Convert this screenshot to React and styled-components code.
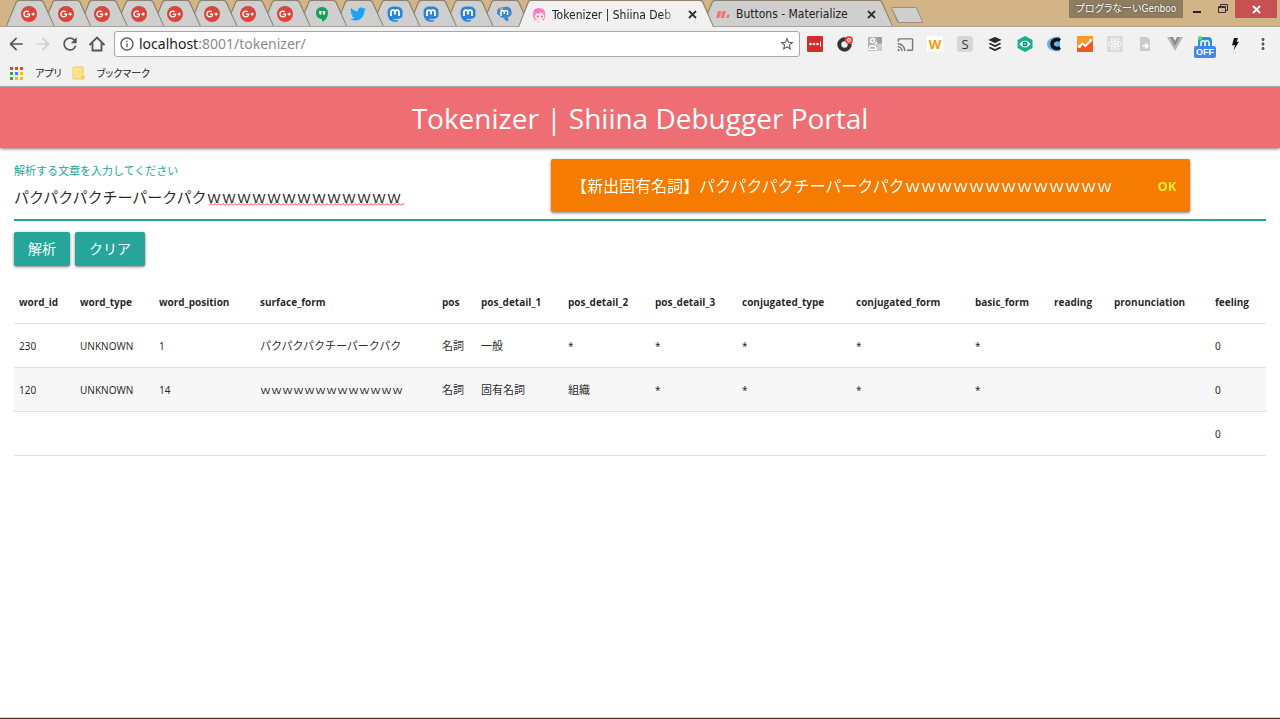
import React, { useState } from 'react';
import styled, { createGlobalStyle, css } from 'styled-components';
import { FaGooglePlusG, FaTwitter, FaBuffer, FaReact } from 'react-icons/fa';
import {
  MdArrowBack,
  MdArrowForward,
  MdRefresh,
  MdInfoOutline,
  MdStarBorder,
  MdCast,
  MdMoreVert,
} from 'react-icons/md';

const UI_FONT = "'DejaVu Sans Condensed', 'Noto Sans CJK JP', sans-serif";
const PAGE_FONT = "'Noto Sans', 'Noto Sans CJK JP', sans-serif";

const GlobalStyle = createGlobalStyle`
  * {
    box-sizing: border-box;
  }

  body {
    margin: 0;
    background: white;
    color: rgba(0, 0, 0, 0.87);
    font-family: ${PAGE_FONT};
  }

  button,
  input {
    margin: 0;
    padding: 0;
    border: 0;
    background: none;
    color: inherit;
    font: inherit;
  }

  svg {
    display: block;
    flex: none;
  }
`;

const Window = styled.div`
  display: flex;
  flex-direction: column;
  min-height: 100vh;
`;

/* ---------- tab strip ---------- */

const TabStrip = styled.div`
  display: flex;
  height: 27px;
  padding-left: 6px;
  background: #d2b487;
  border-bottom: 1px solid #a9a39a;
  font-family: ${UI_FONT};
`;

const PinnedTabs = styled.div`
  display: grid;
  grid-template-columns: repeat(14, 1fr);
  flex: 0 0 512px;
`;

const Tab = styled.div`
  position: relative;
  z-index: ${(props) => props.$level || 0};
  display: flex;
  align-items: center;
  height: ${(props) => (props.$active ? '27px' : '26px')};
  margin-right: -12px;
  padding: 2px 15px 0;

  &::before,
  &::after {
    content: '';
    position: absolute;
    z-index: -1;
    inset: 0;
    background: #8f826c;
    clip-path: polygon(0 100%, 10px 1px, 12px 0, calc(100% - 13px) 0, calc(100% - 11px) 1px, 100% 100%);
  }

  &::after {
    inset: 1px 1px 0;
    background: ${(props) => (props.$active ? '#f2f1f1' : '#cfcfcf')};
  }
`;

const PageTab = styled(Tab)`
  flex: 0 0 ${(props) => (props.$active ? '196px' : '191px')};
  gap: 6px;
  min-width: 0;
  padding: 2px 15px 0 14px;
`;

const TabTitle = styled.span`
  flex: 1;
  white-space: nowrap;
  font-size: 12px;
  line-height: 16px;
  color: #222;
  ${(props) =>
    props.$fade &&
    css`
      mask-image: linear-gradient(to right, black 85%, transparent);
    `}
`;

const TabClose = styled.button`
  display: flex;
  padding: 2px;
  color: #333;
`;

const Badge = styled.span`
  display: flex;
  align-items: center;
  justify-content: center;
  width: 16px;
  height: 16px;
  flex: none;
  border-radius: ${(props) => props.$radius || '0'};
  background: ${(props) => props.$bg || 'transparent'};
  color: ${(props) => props.$color || 'white'};
`;

const NewTab = styled.button`
  width: 32px;
  height: 16px;
  margin: 7px 0 0 10px;
  background: #99907f;
  clip-path: polygon(0 1px, 1px 0, 24px 0, 26px 1px, 100% 15px, 31px 100%, 8px 100%, 6px 15px);

  &::after {
    content: '';
    display: block;
    height: 14px;
    margin: 0 1px;
    background: #cfcfcf;
    clip-path: polygon(0 0, 24px 0, 100% 100%, 7px 100%);
  }
`;

const WindowControls = styled.div`
  display: flex;
  align-items: flex-start;
  margin: 0 3px 0 auto;
  color: #222;
`;

const UserLabel = styled.button`
  width: 114px;
  height: 18px;
  background: #8f7d60;
  color: white;
  font-size: 10px;
  line-height: 16px;
  font-feature-settings: 'palt';
  white-space: nowrap;
  text-shadow: 0 0 2px #333;
`;

const WindowButton = styled.button`
  display: flex;
  align-items: center;
  justify-content: center;
  width: ${(props) => props.$width};
  height: 18px;
  background: ${(props) => props.$bg || 'none'};
  color: ${(props) => (props.$bg ? 'white' : '#222')};
`;

/* ---------- toolbar ---------- */

const Toolbar = styled.div`
  display: flex;
  align-items: center;
  height: 32px;
  padding: 2px 8px 0 7px;
  background: #f2f1f1;
  color: #5a5a5a;
`;

const NavButtons = styled.div`
  display: flex;
  gap: 9px;
  margin-right: 8px;
`;

const ToolButton = styled.button`
  display: flex;
  align-items: center;
  justify-content: center;
  position: relative;
  width: 18px;
  height: 18px;
  color: ${(props) => (props.disabled ? '#cfcfcf' : '#555')};
`;

const AddressBox = styled.div`
  display: flex;
  align-items: center;
  flex: 1;
  gap: 4px;
  height: 26px;
  padding: 0 4px;
  background: white;
  border: 1px solid #a8a8a8;
  border-radius: 3px;
`;

const Address = styled.a`
  flex: 1;
  font-family: 'Noto Sans', sans-serif;
  font-size: 14px;
  line-height: 20px;
  color: #8a8a8a;
  text-decoration: none;

  b {
    font-weight: normal;
    color: #222;
  }
`;

const Extensions = styled.div`
  display: flex;
  gap: 12px;
  margin: 0 10px 0 6px;
`;

const OffBadge = styled.span`
  position: absolute;
  top: 11px;
  left: -2px;
  width: 22px;
  height: 12px;
  border-radius: 2px;
  background: #4285f4;
  color: white;
  font-family: 'Liberation Sans', sans-serif;
  font-size: 9px;
  font-weight: bold;
  line-height: 12px;
  text-align: center;
`;

const BookmarkBar = styled.nav`
  display: flex;
  align-items: center;
  gap: 10px;
  height: 28px;
  padding: 0 9px;
  background: #f2f1f1;
  border-bottom: 1px solid #b9b6b6;
`;

const Bookmark = styled.a`
  display: flex;
  align-items: center;
  gap: 12px;
  color: #222;
  font-size: 10px;
  line-height: 16px;
  font-feature-settings: 'palt';
  text-decoration: none;
`;

/* ---------- page ---------- */

const Header = styled.header`
  position: relative;
  padding-top: 2px;
  background: #ee6e73;
  color: white;
  box-shadow: 0 1px 3px rgba(0, 0, 0, 0.5);
  text-align: center;
`;

const Title = styled.h1`
  margin: 0;
  font-family: 'Open Sans', sans-serif;
  font-size: 28px;
  font-weight: 400;
  line-height: 59px;
`;

const Main = styled.main`
  flex: 1;
  padding: 14px 14px 0;
`;

const Field = styled.div`
  position: relative;
  margin-bottom: 11px;
`;

const FieldLabel = styled.label`
  display: block;
  color: #26a69a;
  font-size: 11px;
  line-height: 18px;
`;

const FieldInput = styled.input`
  display: block;
  width: 100%;
  height: 41px;
  padding-bottom: 6px;
  border-bottom: 2px solid #26a69a;
  outline: none;
  font-size: 15px;
`;

const Squiggle = styled.svg`
  position: absolute;
  top: 41px;
  left: 195px;
`;

const Actions = styled.div`
  display: flex;
  gap: 5px;
  margin-bottom: 13px;
`;

const Button = styled.button`
  height: 34px;
  padding: 0 14px 2px;
  border-radius: 2px;
  background: #26a69a;
  color: white;
  font-size: 14px;
  box-shadow: 0 1px 3px rgba(0, 0, 0, 0.5);
`;

const Table = styled.table`
  width: 100%;
  table-layout: fixed;
  border-collapse: collapse;
  font-size: 10px;
  line-height: 16px;
`;

const Col = styled.col`
  width: ${(props) => props.$width}px;
`;

const Row = styled.tr`
  height: 44px;
  border-bottom: 1px solid #e0e0e0;
  background: ${(props) => (props.$striped ? '#f7f7f7' : 'transparent')};
`;

const HeadCell = styled.th`
  padding: 2px 5px 0;
  text-align: left;
  white-space: nowrap;
  font-family: 'Open Sans', sans-serif;
  font-weight: bold;
`;

const Cell = styled.td`
  padding: 2px 5px 0;
  white-space: nowrap;
  font-size: ${(props) => (props.$japanese ? '11px' : '10px')};
`;

const Toast = styled.div`
  position: fixed;
  z-index: 5;
  top: 159px;
  right: 7%;
  display: flex;
  align-items: center;
  gap: 45px;
  height: 53px;
  padding: 0 14px 0 20px;
  border-radius: 2px;
  background: #f57c00;
  color: white;
  box-shadow: 0 1px 3px rgba(0, 0, 0, 0.5);
  font-size: 16px;
  line-height: 24px;
  white-space: nowrap;
`;

const ToastAction = styled.button`
  color: #f0ec2e;
  font-size: 13px;
  font-weight: bold;
`;

const Taskbar = styled.footer`
  height: 2px;
  background: #4f3a2c;
  border-top: 1px solid #d6d2ce;
`;

/* ---------- drawings ---------- */

const GooglePlus = () => (
  <Badge $bg="#d9453a" $radius="50%">
    <FaGooglePlusG size={12} />
  </Badge>
);

const Hangouts = () => (
  <svg width="16" height="16" viewBox="0 0 16 16">
    <path d="M8 1C4 1 2 4 2 7s2 6 6 6v3c3-1.500 6-4.500 6-9 0-3-2-6-6-6z" fill="#12a05c" />
    <path d="M5 5h2.500v2.500L6.500 9H5.500l.6-1.500H5zM8.700 5h2.500v2.500L10.200 9h-1l.6-1.500H8.700z" fill="white" />
  </svg>
);

const Twitter = () => <FaTwitter size={16} color="#1da1f2" />;

const Mastodon = () => (
  <svg width="16" height="16" viewBox="0 0 16 16">
    <path
      d="M4 1c2-.6 6-.6 8 0 2 .500 3.500 2 3.500 4v4c0 2-1.500 3.500-3.500 3.800-2 .3-4 .3-6 0 .3 1.400 2.500 1.700 5 1.200v1.200C7 16.400 3 15.500 1.500 12 .6 10 .400 7 .600 5 .800 3 2 1.500 4 1z"
      fill="#2b85d6"
    />
    <path
      d="M4 10V6c0-2.600 4-2.600 4 0v2.500V6c0-2.600 4-2.600 4 0v4"
      fill="none"
      stroke="white"
      strokeWidth="1.800"
    />
  </svg>
);

const MastodonBird = () => (
  <svg width="16" height="16" viewBox="0 0 16 16">
    <path
      d="M1 4c1-1 2-3 5-2.500C8 1 12 0 14 2c1 1 2 3 1.500 6-.500 2-2 3-4 3l1 2-1 2.500-2-1L8 12c-2 0-4-1-5-2.500L.5 7l1-1z"
      fill="#3a88cf"
    />
    <path d="M5 10V6c0-2 3.300-2 3.300 0v2V6c0-2 3.300-2 3.300 0v3" fill="none" stroke="white" strokeWidth="1.500" />
    <path d="M3 3l3-1.500 1.500 1-2.500 2z" fill="#f0a43a" />
  </svg>
);

const Shiina = () => (
  <svg width="14" height="16" viewBox="0 0 14 16">
    <path d="M1 10C0 5 2 1 7 1s7 3 6 9l-1 3H3z" fill="#f58bca" />
    <path d="M3 9l2-3 2 1 2-2 3 3c.500 3-1 5-4.500 5S3 12 3 9z" fill="#fbe3e4" />
    <path d="M2 4l4-2M5 6l3-4M9 6l1-3" stroke="#ee5fb4" />
    <path d="M5 9.500h1.500M9 9.500h1.500" stroke="#a8587f" strokeWidth="1.500" />
    <path d="M2 12l1 2.500M12 12l-1 2M5 14.500l3 .500" stroke="#f7b0dc" />
  </svg>
);

const Materialize = () => (
  <svg width="14" height="14" viewBox="0 0 14 14" fill="#f2777c">
    <path d="M0 11L2 4h3.500l-2 7zM4.500 11l2-7H10l-2 7zM10 11l1.500-3.500H14L12.500 11z" />
  </svg>
);

const Cross = () => (
  <svg width="9" height="9" viewBox="0 0 9 9">
    <path d="M1 1l7 7M8 1L1 8" stroke="currentColor" strokeWidth="1.800" />
  </svg>
);

const Home = () => (
  <svg width="18" height="18" viewBox="0 0 18 18" fill="none" stroke="#555" strokeWidth="1.800">
    <path d="M1.500 10L9 2.500l7.500 7.500M4.500 8v7.500h9V8" />
  </svg>
);

const AppsGrid = () => (
  <svg width="14" height="14" viewBox="0 0 14 14">
    {['#ea4335', '#ea4335', '#ea4335', '#34a853', '#4285f4', '#fbbc05', '#34a853', '#fbbc05', '#fbbc05'].map(
      (fill, i) => (
        <rect key={i} x={(i % 3) * 5 + 1} y={Math.floor(i / 3) * 5 + 1} width="3" height="3" fill={fill} />
      )
    )}
  </svg>
);

const Folder = () => (
  <svg width="13" height="14" viewBox="0 0 13 14">
    <path d="M1 1h10v9h1v3H1z" fill="#ffe28a" stroke="#efcb62" />
    <path d="M9 13v-3h3v3z" fill="#f5cf5e" />
  </svg>
);

const LastPass = () => (
  <svg width="16" height="16" viewBox="0 0 16 16">
    <rect width="16" height="16" rx="1" fill="#d32d27" />
    <circle cx="3.500" cy="8" r="1.300" fill="white" />
    <circle cx="7" cy="8" r="1.300" fill="white" />
    <circle cx="10.500" cy="8" r="1.300" fill="white" />
    <path d="M13.500 5.500v5" stroke="white" />
  </svg>
);

const RingBadge = () => (
  <svg width="16" height="16" viewBox="0 0 16 16">
    <circle cx="7.500" cy="8.500" r="5.200" fill="none" stroke="#333" strokeWidth="4" />
    <path d="M9 7l4-4" stroke="#f2f1f1" strokeWidth="2" />
    <circle cx="12" cy="4" r="4" fill="#f04b4b" />
    <circle cx="12" cy="4" r="1.500" fill="none" stroke="white" />
  </svg>
);

const GrayPerson = () => (
  <svg width="16" height="16" viewBox="0 0 16 16">
    <rect x="1" y="1" width="14" height="14" fill="#b3b3b3" />
    <path d="M10 1h5v6h-5z" fill="#9f9f9f" />
    <path d="M9 8h6v7H9z" fill="#cdcdcd" />
    <circle cx="5.500" cy="4.500" r="2" fill="none" stroke="white" strokeWidth="1.300" />
    <path d="M2 13.500c0-5 7-5 7 0zM8 9l2-3" fill="none" stroke="white" strokeWidth="1.300" />
  </svg>
);

const Letter = styled.span`
  font-family: 'Open Sans', sans-serif;
  font-size: 13px;
  font-weight: ${(props) => props.$weight || 'bold'};
  line-height: 16px;
`;

const Eye = () => (
  <svg width="16" height="16" viewBox="0 0 16 16">
    <path d="M8 0l7.500 4v8L8 16 .5 12V4z" fill="#17b287" />
    <path d="M2.500 8c3-4.500 8-4.500 11 0-3 4.500-8 4.500-11 0z" fill="white" />
    <circle cx="8" cy="8" r="2.500" fill="#1687a8" />
    <circle cx="8" cy="8" r="1" fill="#8fd3e6" />
  </svg>
);

const BlueC = () => (
  <svg width="16" height="16" viewBox="0 0 16 16">
    <path d="M13 1C8 0 0 2 0 8s7 8 13 7z" fill="#63b5ee" />
    <path d="M13 4.500C10 2.500 5 4 5 8s5 5.500 8 3.500" fill="none" stroke="#111" strokeWidth="3.500" />
  </svg>
);

const Chart = () => (
  <svg width="16" height="16" viewBox="0 0 16 16">
    <rect width="16" height="16" rx="1" fill="#fb9a2c" />
    <path d="M0 12l5-3 3 2 6-7 2 1v10a1 1 0 0 1-1 1H1a1 1 0 0 1-1-1z" fill="#f05a28" />
    <path d="M2 11l3.500-3.500L8.500 10 14 4.500" fill="none" stroke="white" strokeWidth="1.800" />
    <circle cx="2.500" cy="10.500" r="1.500" fill="white" />
    <circle cx="13.500" cy="4.500" r="1.500" fill="white" />
  </svg>
);

const Doc = () => (
  <svg width="12" height="14" viewBox="0 0 12 14">
    <path d="M1 0h7l3 3v11H1z" fill="#cbcbcb" />
    <path d="M3.500 9H8M6.500 6.500L9 9l-2.500 2.500" fill="none" stroke="white" strokeWidth="1.500" />
  </svg>
);

const Vue = () => (
  <svg width="16" height="14" viewBox="0 0 16 14">
    <path d="M0 0h5l3 5 3-5h5L8 14z" fill="#b5b5b5" />
    <path d="M3 0h3l2 4 2-4h3L8 9z" fill="#8c8c8c" />
  </svg>
);

const MastodonSmall = () => (
  <svg width="16" height="16" viewBox="0 0 16 16">
    <rect x="1" y="1" width="14" height="15" rx="4" fill="#2f8fd8" />
    <path d="M4 11V6.500c0-2.500 4-2.500 4 0V10 6.500c0-2.500 4-2.500 4 0V11" fill="none" stroke="white" strokeWidth="1.500" />
    <circle cx="3" cy="2" r="2" fill="#5be04a" />
  </svg>
);

const Bolt = () => (
  <svg width="12" height="14" viewBox="0 0 12 14">
    <path d="M5 1h4L7.500 5 10 4.500 4.500 13.500 6 8l-3 .5z" fill="#111" />
  </svg>
);

/* ---------- data ---------- */

const PINNED = [
  ...Array(8).fill(['Google+', GooglePlus]),
  ['Hangouts', Hangouts],
  ['Twitter', Twitter],
  ['Mastodon', Mastodon],
  ['Mastodon', Mastodon],
  ['Mastodon', Mastodon],
  ['Mastodon', MastodonBird],
];

const EXTENSIONS = [
  ['LastPass', <LastPass />],
  ['Ring', <RingBadge />],
  ['Contacts', <GrayPerson />],
  ['Cast', <MdCast size={17} color="#71777d" />],
  ['W', <Badge $bg="#fff" $color="#f79a0e"><Letter>W</Letter></Badge>],
  ['S', <Badge $bg="#d6d6d6" $color="#333" $radius="3px"><Letter $weight="normal">S</Letter></Badge>],
  ['Buffer', <FaBuffer size={16} color="#222b30" />],
  ['Eye', <Eye />],
  ['C', <BlueC />],
  ['Chart', <Chart />],
  ['React', <Badge $bg="#dcdcdc"><FaReact size={14} /></Badge>],
  ['Doc', <Doc />],
  ['Vue', <Vue />],
  ['Mastodon', <><MastodonSmall /><OffBadge>OFF</OffBadge></>],
  ['Bolt', <Bolt />],
];

const COLUMNS = [
  ['word_id', 61],
  ['word_type', 79],
  ['word_position', 101],
  ['surface_form', 182],
  ['pos', 39],
  ['pos_detail_1', 87],
  ['pos_detail_2', 87],
  ['pos_detail_3', 87],
  ['conjugated_type', 114],
  ['conjugated_form', 119],
  ['basic_form', 79],
  ['reading', 60],
  ['pronunciation', 101],
  ['feeling', 56],
];

const WORDS = [
  ['230', 'UNKNOWN', '1', 'パクパクパクチーパークパク', '名詞', '一般', '*', '*', '*', '*', '*', '', '', '0'],
  ['120', 'UNKNOWN', '14', 'ｗｗｗｗｗｗｗｗｗｗｗｗｗ', '名詞', '固有名詞', '組織', '*', '*', '*', '*', '', '', '0'],
  ['', '', '', '', '', '', '', '', '', '', '', '', '', '0'],
];

const SENTENCE = 'パクパクパクチーパークパクｗｗｗｗｗｗｗｗｗｗｗｗｗ';

const isJapanese = (text) => /[^\x00-\x7f]/.test(text);

/* ---------- sections ---------- */

const BrowserTabs = () => (
  <TabStrip>
    <PinnedTabs>
      {PINNED.map(([name, Icon], i) => (
        <Tab key={i} $level={PINNED.length - i} aria-label={name}>
          <Icon />
        </Tab>
      ))}
    </PinnedTabs>
    <PageTab $active $level={20}>
      <Shiina />
      <TabTitle $fade>Tokenizer | Shiina Deb</TabTitle>
      <TabClose aria-label="Close tab">
        <Cross />
      </TabClose>
    </PageTab>
    <PageTab $level={1}>
      <Materialize />
      <TabTitle>Buttons - Materialize</TabTitle>
      <TabClose aria-label="Close tab">
        <Cross />
      </TabClose>
    </PageTab>
    <NewTab aria-label="New tab" />
    <WindowControls>
      <UserLabel>プログラなーいGenboo</UserLabel>
      <WindowButton $width="28px" aria-label="Minimize">
        <svg width="8" height="10" viewBox="0 0 8 10">
          <path d="M0 8h8" stroke="#222" strokeWidth="2" />
        </svg>
      </WindowButton>
      <WindowButton $width="24px" aria-label="Restore">
        <svg width="10" height="10" viewBox="0 0 10 10" fill="none" stroke="#333">
          <path d="M2.500 2V.500h7v6H8M.500 2.500h7v6h-7zM.500 3.500h7" />
        </svg>
      </WindowButton>
      <WindowButton $width="42px" $bg="#c75050" aria-label="Close">
        <Cross />
      </WindowButton>
    </WindowControls>
  </TabStrip>
);

const BrowserToolbar = () => (
  <Toolbar>
    <NavButtons>
      <ToolButton aria-label="Back">
        <MdArrowBack size={20} />
      </ToolButton>
      <ToolButton aria-label="Forward" disabled>
        <MdArrowForward size={20} />
      </ToolButton>
      <ToolButton aria-label="Reload">
        <MdRefresh size={20} />
      </ToolButton>
      <ToolButton aria-label="Home">
        <Home />
      </ToolButton>
    </NavButtons>
    <AddressBox>
      <MdInfoOutline size={16} />
      <Address href="#tokenizer">
        <b>localhost</b>:8001/tokenizer/
      </Address>
      <MdStarBorder size={16} />
    </AddressBox>
    <Extensions>
      {EXTENSIONS.map(([name, icon]) => (
        <ToolButton key={name} aria-label={name}>
          {icon}
        </ToolButton>
      ))}
    </Extensions>
    <ToolButton aria-label="Menu">
      <MdMoreVert size={18} />
    </ToolButton>
  </Toolbar>
);

const WordTable = () => (
  <Table>
    <colgroup>
      {COLUMNS.map(([name, width]) => (
        <Col key={name} $width={width} />
      ))}
    </colgroup>
    <thead>
      <Row>
        {COLUMNS.map(([name]) => (
          <HeadCell key={name}>{name}</HeadCell>
        ))}
      </Row>
    </thead>
    <tbody>
      {WORDS.map((word, i) => (
        <Row key={i} $striped={i % 2 === 1}>
          {word.map((value, j) => (
            <Cell key={j} $japanese={isJapanese(value)}>
              {value}
            </Cell>
          ))}
        </Row>
      ))}
    </tbody>
  </Table>
);

const App = () => {
  const [sentence, setSentence] = useState(SENTENCE);

  return (
    <Window>
      <GlobalStyle />
      <BrowserTabs />
      <BrowserToolbar />
      <BookmarkBar>
        <Bookmark href="#apps">
          <AppsGrid />
          アプリ
        </Bookmark>
        <Bookmark href="#bookmarks">
          <Folder />
          ブックマーク
        </Bookmark>
      </BookmarkBar>
      <Header>
        <Title>Tokenizer | Shiina Debugger Portal</Title>
      </Header>
      <Main>
        <Field>
          <FieldLabel htmlFor="sentence">解析する文章を入力してください</FieldLabel>
          <FieldInput
            id="sentence"
            type="text"
            spellCheck={false}
            value={sentence}
            onChange={(e) => setSentence(e.target.value)}
          />
          {sentence === SENTENCE && (
            <Squiggle width="195" height="3">
              <defs>
                <pattern id="wave" width="4" height="3" patternUnits="userSpaceOnUse">
                  <path d="M0 2.500L2 .500l2 2" fill="none" stroke="#f33" />
                </pattern>
              </defs>
              <rect width="195" height="3" fill="url(#wave)" />
            </Squiggle>
          )}
        </Field>
        <Actions>
          <Button>解析</Button>
          <Button onClick={() => setSentence('')}>クリア</Button>
        </Actions>
        <WordTable />
      </Main>
      <Toast>
        <span>【新出固有名詞】パクパクパクチーパークパクｗｗｗｗｗｗｗｗｗｗｗｗｗ</span>
        <ToastAction>OK</ToastAction>
      </Toast>
      <Taskbar />
    </Window>
  );
};

export default App;
